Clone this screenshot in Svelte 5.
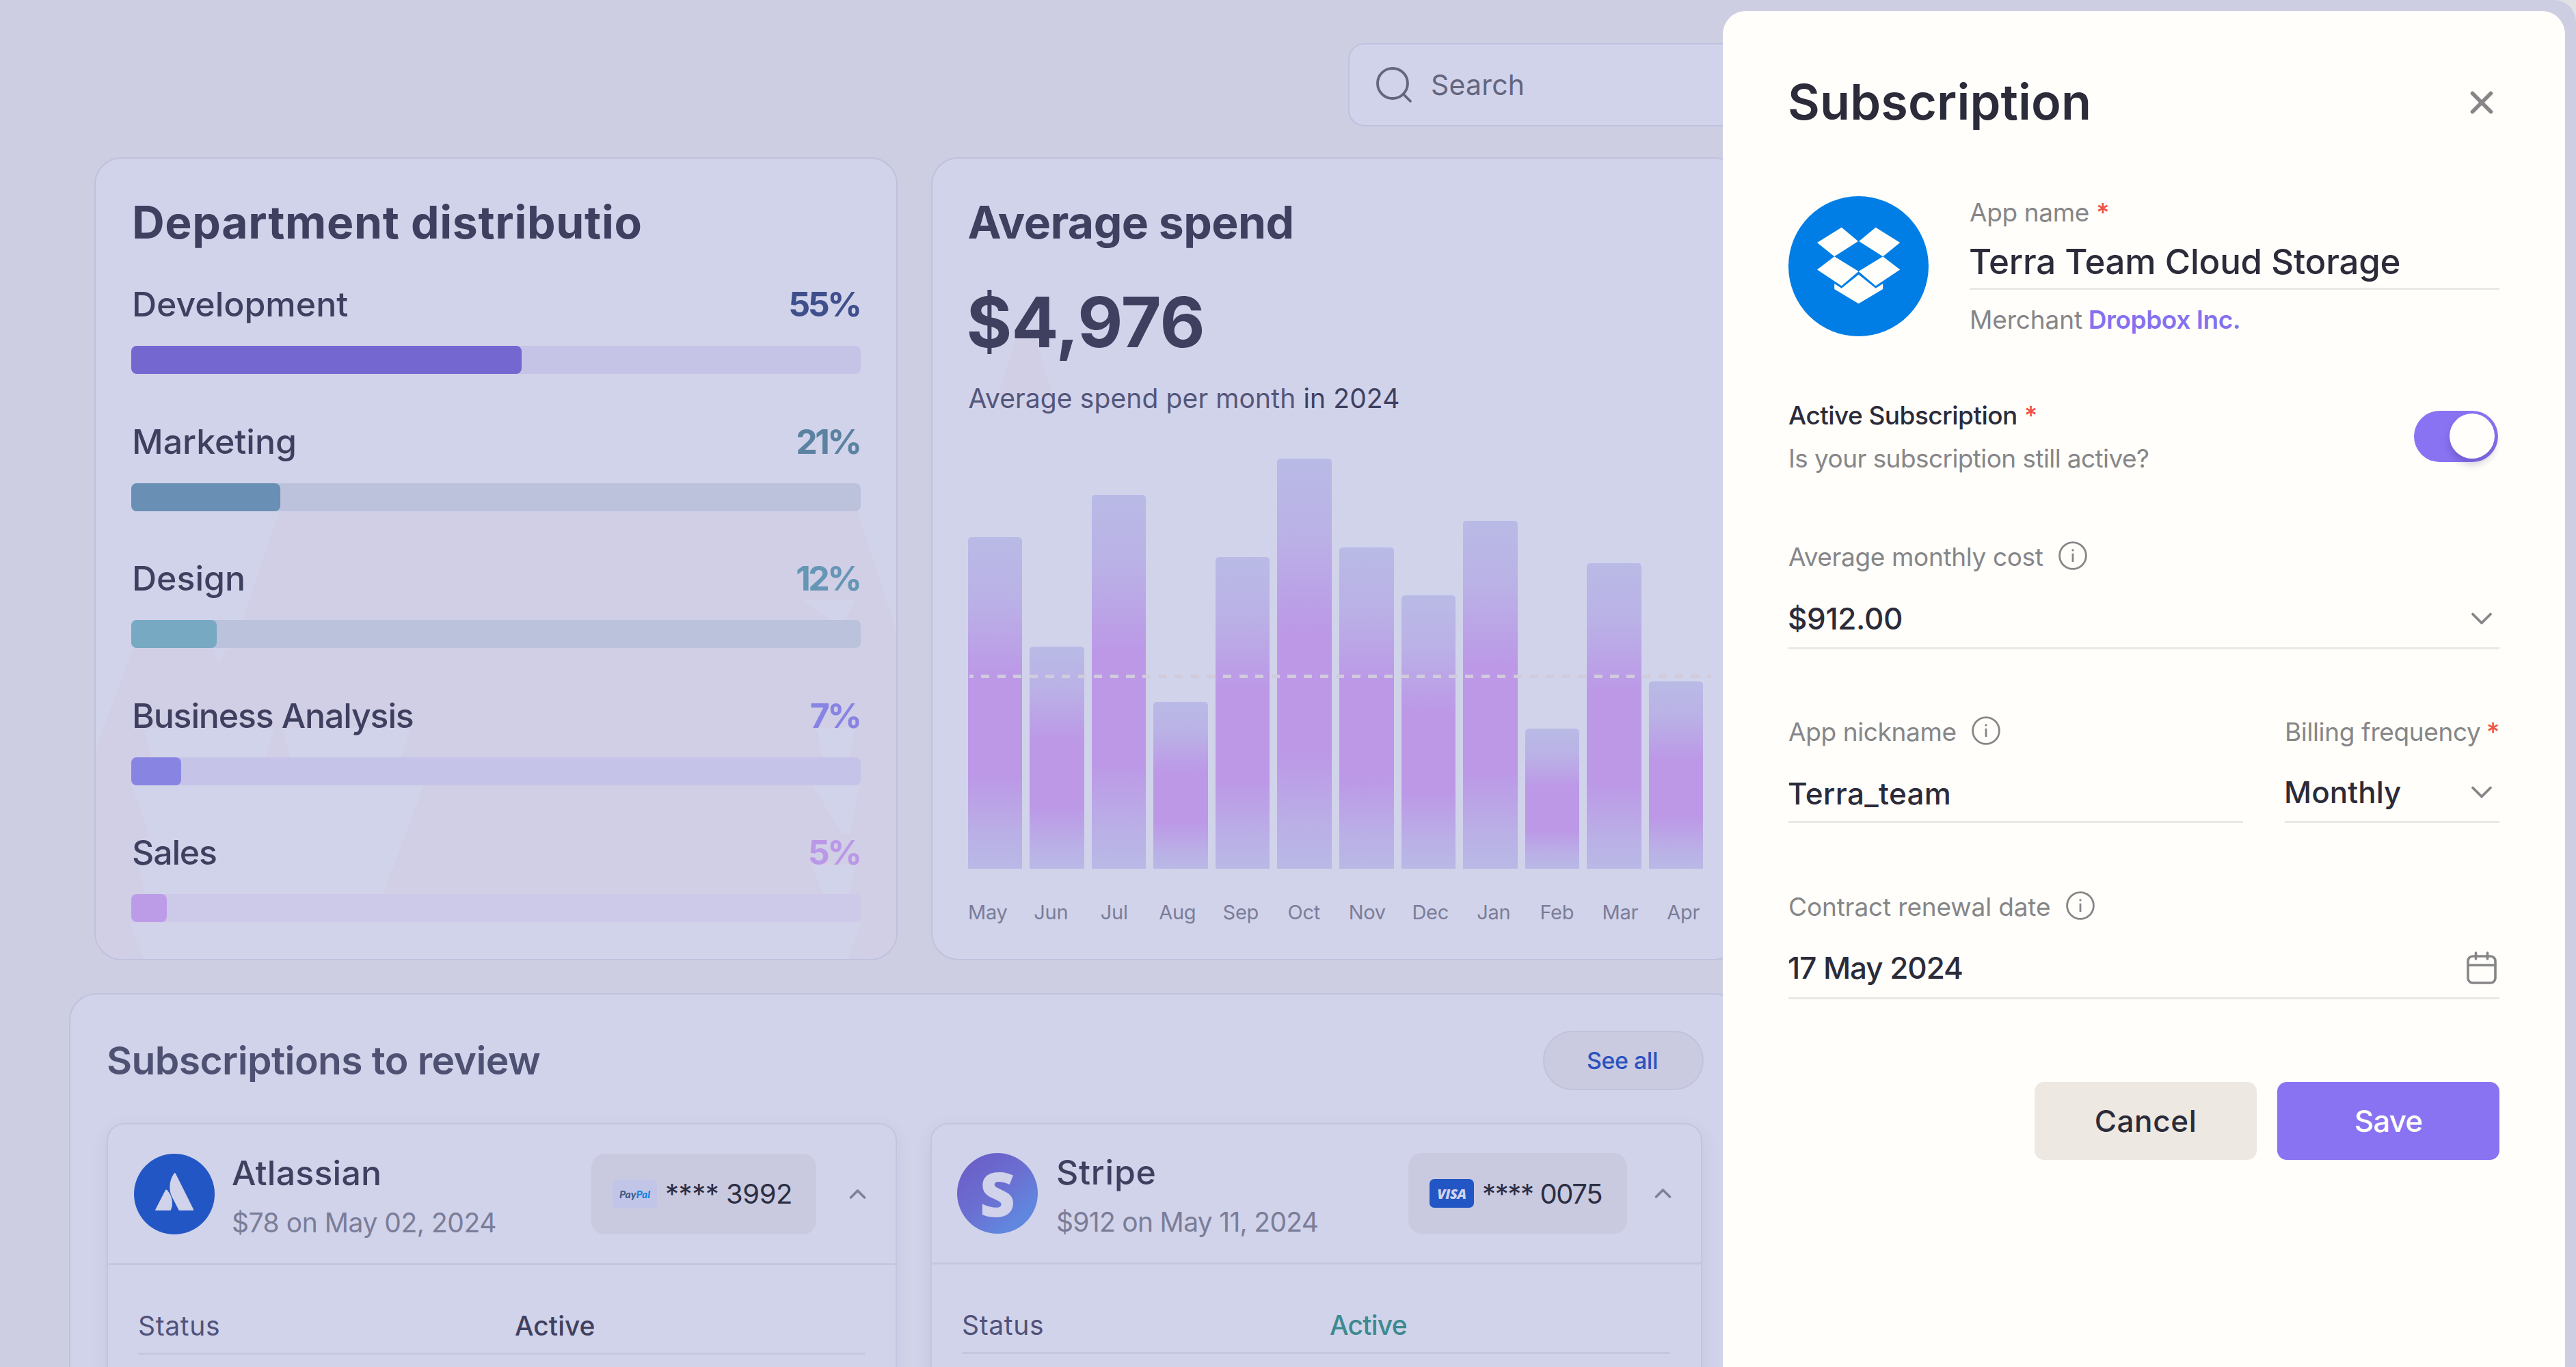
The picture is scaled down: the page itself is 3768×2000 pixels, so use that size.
<script lang="ts">
  type Department = { name: string; percent: number; width: number; tone: string }
  type Review = {
    id: string
    name: string
    charge: string
    card: 'PayPal' | 'VISA'
    digits: string
    green?: boolean
  }

  const departments: Department[] = [
    { name: 'Development', percent: 55, width: 53.5, tone: 'violet' },
    { name: 'Marketing', percent: 21, width: 20.4, tone: 'steel' },
    { name: 'Design', percent: 12, width: 11.7, tone: 'teal' },
    { name: 'Business Analysis', percent: 7, width: 6.8, tone: 'indigo' },
    { name: 'Sales', percent: 5, width: 4.9, tone: 'orchid' },
  ]

  // bar height in percent of the tallest month
  const months = [
    { label: 'May', value: 80.9 },
    { label: 'Jun', value: 54.2 },
    { label: 'Jul', value: 91.1 },
    { label: 'Aug', value: 40.7 },
    { label: 'Sep', value: 76 },
    { label: 'Oct', value: 100 },
    { label: 'Nov', value: 78.4 },
    { label: 'Dec', value: 66.7 },
    { label: 'Jan', value: 84.9 },
    { label: 'Feb', value: 34.1 },
    { label: 'Mar', value: 74.5 },
    { label: 'Apr', value: 45.6 },
  ]

  const reviews: Review[] = [
    { id: 'atlassian', name: 'Atlassian', charge: '$78 on May 02, 2024', card: 'PayPal', digits: '3992' },
    { id: 'stripe', name: 'Stripe', charge: '$912 on May 11, 2024', card: 'VISA', digits: '0075', green: true },
  ]

  let active = $state(true)
</script>

{#snippet info()}
  <svg class="info" viewBox="0 0 42 42" fill="none" stroke="currentColor" stroke-width="2.8">
    <circle cx="21" cy="21" r="19.4" />
    <path d="M21 17.8V30" />
    <path d="M21 11.4V14.4" />
  </svg>
{/snippet}

{#snippet chevron()}
  <svg class="chevron" viewBox="0 0 32 20" fill="none" stroke="currentColor" stroke-width="3.8" stroke-linecap="round" stroke-linejoin="round">
    <path d="M3 3.5 16 16.5 29 3.5" />
  </svg>
{/snippet}

<div class="app">
  <div class="dashboard">
    <div class="search">
      <svg width="54" height="54" viewBox="0 0 54 54" fill="none" stroke="currentColor" stroke-width="3.8" stroke-linecap="round">
        <circle cx="25" cy="25" r="22" />
        <path d="M40.5 40.5 51 51" />
      </svg>
      <span>Search</span>
    </div>

    <div class="row">
      <section class="card departments">
        <svg class="departments__tint" viewBox="0 0 1174 1174">
          <path class="tint" d="M271 518H1116L1167 675 1174 700V1174H0V872L57 718H172L182 740 217 675 252 570Z" />
          <path class="clear" d="M72 835H263L251 879 269 897 287 879 275 835H462L449 879 482 919 422 1079H75L62 1030 80 990 54 919 84 879Z" />
          <path class="clear" d="M52 1120H1122L1102 1174H72Z" />
          <path class="clear" d="M1035 648H1113L1094 688Z" />
          <path class="clear" d="M1056 835H1113L1105 879 1120 919 1105 990H1094L1050 919 1065 879Z" />
          <path class="clear" d="M1049 1035H1113L1105 1079H1065Z" />
        </svg>

        <h2 class="card__title card__title--wide">Department distributio</h2>
        {#each departments as d}
          <div class="dept dept--{d.tone}">
            <div class="dept__head">
              <span class="dept__name" class:dept__name--tight={d.percent < 10}>{d.name}</span>
              <span class="dept__percent">{d.percent}%</span>
            </div>
            <div class="dept__track">
              <div class="dept__fill" style="width: {d.width}%"></div>
            </div>
          </div>
        {/each}
      </section>

      <section class="card spend">
        <svg class="spend__tint" viewBox="0 0 80 84"><path class="tint" d="M26 0H56L79 84H0Z" /></svg>
        <h2 class="card__title">Average spend</h2>
        <div class="spend__total">$4,976</div>
        <div class="spend__caption">Average spend per month <b>in 2024</b></div>
        <div class="chart">
          {#each months as m}
            <div class="chart__bar" style="height: {m.value}%"></div>
          {/each}
          <div class="chart__average"></div>
        </div>
        <div class="months">
          {#each months as m}
            <span>{m.label}</span>
          {/each}
        </div>
      </section>
    </div>

    <section class="card reviews">
      <div class="reviews__head">
        <h2>Subscriptions to review</h2>
        <button class="see-all" type="button">See all</button>
      </div>

      <div class="reviews__list">
        {#each reviews as r}
          <article class="review review--{r.id}">
            <header class="review__head">
              {#if r.id === 'atlassian'}
                <svg class="review__logo" viewBox="0 0 118 118">
                  <circle cx="59" cy="59" r="59" fill="#2356c5" />
                  <path fill="#d1d3ea" d="M45.7 53.8Q47 51.6 48.8 53.4C56 62 58 73 53.6 83H32Q30.6 83 31.4 81.4Z" />
                  <path fill="#d1d3ea" d="M58.4 29Q59.7 26.8 60.9 29L87 81.2Q87.6 83 85.8 83H65.8L55 62C51 53 51 40 58.4 29Z" />
                </svg>
              {:else}
                <div class="review__logo review__logo--stripe">S</div>
              {/if}

              <div class="review__text">
                <div class="review__name">{r.name}</div>
                <div class="review__charge">{r.charge}</div>
              </div>

              <div class="pay">
                {#if r.card === 'PayPal'}
                  <span class="pay__brand pay__brand--paypal">Pay<i>Pal</i></span>
                {:else}
                  <span class="pay__brand pay__brand--visa">VISA</span>
                {/if}
                <span class="pay__digits">**** {r.digits}</span>
              </div>

              <svg class="review__toggle" width="25" height="16" viewBox="0 0 25 16" fill="none" stroke="currentColor" stroke-width="3.6" stroke-linecap="round" stroke-linejoin="round">
                <path d="M2.5 13 12.5 3 22.5 13" />
              </svg>
            </header>

            <div class="status">
              <span>Status</span>
              <strong class:status--green={r.green}>Active</strong>
            </div>
          </article>
        {/each}
      </div>
    </section>
  </div>

  <aside class="panel">
    <header class="panel__head">
      <h1>Subscription</h1>
      <svg width="36" height="36" viewBox="0 0 36 36" fill="none" stroke="currentColor" stroke-width="5.6" stroke-linecap="round">
        <path d="M4.5 4.5 31.5 31.5M31.5 4.5 4.5 31.5" />
      </svg>
    </header>

    <div class="product">
      <svg class="product__logo" viewBox="0 0 205 205">
        <circle cx="102.5" cy="102.5" r="102.5" fill="#007ee6" />
        <g fill="#fffefa">
          <path d="M77.7 45.8 102 66 67.2 88.2 42 68Z" />
          <path d="M127.6 45.8 163.2 68 138.2 88.2 103.2 66Z" />
          <path d="M67.2 88.2 102.6 110 77.7 131.2 42 107.6Z" />
          <path d="M138.2 88.2 163.2 107.6 127.6 131.2 102.6 110Z" />
          <path d="M102.6 114.7 127.6 134.8 138.2 128V136L102.6 157.3 67.2 136V128L77.7 134.8Z" />
        </g>
      </svg>
      <div class="product__fields">
        <div class="label">App name <em>*</em></div>
        <div class="product__name">Terra Team Cloud Storage</div>
        <div class="label label--merchant">Merchant <a href="#merchant">Dropbox Inc.</a></div>
      </div>
    </div>

    <div class="activity">
      <div>
        <div class="label label--strong">Active Subscription <em>*</em></div>
        <div class="label label--question">Is your subscription still active?</div>
      </div>
      <button class="switch" class:switch--on={active} type="button" aria-label="Active subscription" onclick={() => (active = !active)}></button>
    </div>

    <div class="field">
      <div class="label">Average monthly cost {@render info()}</div>
      <div class="field__value">$912.00 {@render chevron()}</div>
    </div>

    <div class="field-row">
      <div class="field field--nickname">
        <div class="label">App nickname {@render info()}</div>
        <div class="field__value field__value--wide">Terra_team</div>
      </div>
      <div class="field field--billing">
        <div class="label">Billing frequency <em>*</em></div>
        <div class="field__value field__value--monthly">Monthly {@render chevron()}</div>
      </div>
    </div>

    <div class="field field--date">
      <div class="label label--loose">Contract renewal date {@render info()}</div>
      <div class="field__value field__value--date">
        17 May 2024
        <svg class="calendar" width="44" height="48" viewBox="0 0 44 48" fill="none" stroke="currentColor" stroke-width="3.6" stroke-linecap="round">
          <rect x="2" y="7" width="40" height="39" rx="7" />
          <path d="M2 20H42M13.5 2V11M30.5 2V11" />
        </svg>
      </div>
    </div>

    <div class="actions">
      <button class="btn" type="button">Cancel</button>
      <button class="btn btn--primary" type="button">Save</button>
    </div>
  </aside>
</div>

<style>
  :global(body) {
    background: #e2e2e6;
  }

  .app {
    position: relative;
    width: 3768px;
    height: 2000px;
    overflow: hidden;
    border-radius: 0 32px 0 0;
    background: #cecee3;
    color: #3f4060;
    font-family: Inter, 'Liberation Sans', sans-serif;
  }

  h1, h2 { margin: 0; }

  button {
    padding: 0;
    border: 0;
    font: inherit;
    color: inherit;
  }

  svg {
    display: block;
    flex-shrink: 0;
  }

  .dashboard {
    display: flex;
    flex-direction: column;
    width: 2548px;
    padding: 63px 0 0 101px;
    box-sizing: border-box;
  }

  /* ── Search ── */
  .search {
    display: flex;
    align-items: center;
    gap: 27px;
    width: 576px;
    height: 122px;
    box-sizing: border-box;
    margin-left: auto;
    padding-left: 38px;
    border: 2px solid #bfc1de;
    border-radius: 24px;
    background: #d1d3ea;
    color: #64657f;
    font-size: 41px;
    letter-spacing: 0.005em;
  }

  /* ── Cards ── */
  .row {
    display: flex;
    gap: 49px;
    height: 1175px;
    margin: 45px 0 0 37px;
  }

  .card {
    position: relative;
    box-sizing: border-box;
    border: 2px solid #bfc1dd;
    border-radius: 40px;
    background: #d1d3ea;
    overflow: hidden;
  }

  .card__title {
    position: relative;
    font-size: 66px;
    font-weight: 700;
    line-height: 80px;
    letter-spacing: -0.008em;
  }

  .card__title--wide {
    padding-left: 1px;
    letter-spacing: 0.0105em;
  }

  .tint { fill: #d1cfe6; }
  .clear { fill: #d1d3ea; }

  /* ── Department distribution ── */
  .departments {
    width: 1175px;
    padding: 53px 52px 0 52px;
  }

  .departments__tint {
    position: absolute;
    top: -2px;
    left: -2px;
    width: 1174px;
    height: 1174px;
  }

  .dept {
    position: relative;
    margin-bottom: 68.5px;
  }

  .card__title + .dept { margin-top: 50px; }

  .dept__head {
    display: flex;
    justify-content: space-between;
    padding: 0 1px;
    font-size: 50px;
    line-height: 60px;
  }

  .dept__name { font-weight: 500; }
  .dept__name--tight { letter-spacing: -0.023em; }

  .dept__percent {
    font-weight: 650;
    letter-spacing: -0.07em;
  }

  .dept__track {
    height: 41px;
    margin-top: 31px;
    border-radius: 8px;
  }

  .dept__fill {
    height: 100%;
    border-radius: 8px;
  }

  .dept--violet .dept__percent { color: #3f4f8c; }
  .dept--violet .dept__track { background: #c5c4e6; }
  .dept--violet .dept__fill { background: #7467d0; }

  .dept--steel .dept__percent { color: #5b82a0; }
  .dept--steel .dept__track { background: #bcc1dc; }
  .dept--steel .dept__fill { background: #6a8fb4; }

  .dept--teal .dept__percent { color: #6596b6; }
  .dept--teal .dept__track { background: #bbc2db; }
  .dept--teal .dept__fill { background: #78a9c3; }

  .dept--indigo .dept__percent { color: #8784e4; }
  .dept--indigo .dept__track { background: #c5c4e8; }
  .dept--indigo .dept__fill { background: #8885e2; }

  .dept--orchid .dept__percent { color: #bb98e7; }
  .dept--orchid .dept__track { background: #cdc9e8; }
  .dept--orchid .dept__fill { background: #bd9ce7; }

  /* ── Average spend ── */
  .spend {
    width: 1187px;
    padding: 53px 0 0 52px;
  }

  .spend__tint {
    position: absolute;
    top: 263px;
    left: 96px;
    width: 80px;
    height: 84px;
  }

  .spend__total {
    position: relative;
    margin: 51px 0 0 -2px;
    font-size: 102px;
    font-weight: 700;
    line-height: 110px;
    letter-spacing: -0.008em;
  }

  .spend__caption {
    position: relative;
    margin: 33px 0 0 1px;
    color: #54567a;
    font-size: 39px;
    line-height: 48px;
    letter-spacing: 0.003em;
  }

  .spend__caption b {
    color: #3f4060;
    font-weight: 400;
  }

  .chart {
    position: relative;
    display: flex;
    align-items: flex-end;
    gap: 11px;
    width: 1076px;
    height: 600px;
    margin-top: 64px;
  }

  .chart__bar {
    flex: 1;
    border-radius: 5px 5px 0 0;
    background: linear-gradient(#b9bae6, #bab2e6 18%, #bc98e7 42%, #bc98e7 72%, #bab0e6 90%, #b9b9e6);
  }

  .chart__average {
    position: absolute;
    top: 316px;
    left: 2px;
    width: 1085px;
    height: 5px;
    background: repeating-linear-gradient(90deg, #d0cbdd 0 12.2px, transparent 12.2px 23.6px) -6.7px 0 / 1100px 5px no-repeat;
  }

  .months {
    display: grid;
    grid-template-columns: repeat(12, 92.5px);
    margin: 46px 0 0 -17px;
    color: #7b7d99;
    font-size: 29px;
    line-height: 36px;
    letter-spacing: -0.01em;
    text-align: center;
  }

  /* ── Subscriptions to review ── */
  .reviews {
    width: 2447px;
    height: 700px;
    margin-top: 48px;
    padding: 53px 54px 0 53px;
  }

  .reviews__head {
    display: flex;
    align-items: center;
    justify-content: space-between;
    height: 87px;
  }

  .reviews__head h2 {
    color: #4f5173;
    font-size: 57px;
    font-weight: 600;
    letter-spacing: -0.0103em;
  }

  .see-all {
    width: 235px;
    height: 87px;
    padding-right: 3px;
    border: 2px solid #c1c3dc;
    border-radius: 44px;
    background: #cacbe0;
    color: #2b52be;
    font-size: 34px;
    font-weight: 500;
    letter-spacing: -0.014em;
  }

  .reviews__list {
    display: flex;
    gap: 49px;
    margin-top: 48px;
  }

  .review {
    box-sizing: border-box;
    width: 1156px;
    height: 600px;
    border: 2px solid #c3c4de;
    border-radius: 26px;
    box-shadow: 0 8px 24px rgba(80, 80, 130, 0.09);
  }

  .review--stripe { width: 1129px; }

  .review__head {
    display: flex;
    align-items: center;
    height: 203px;
    padding: 0 43px 0 38px;
    border-bottom: 3px solid #c5c6df;
  }

  .review--stripe .review__head {
    height: 202px;
    padding-left: 37px;
  }

  .review__logo {
    flex-shrink: 0;
    width: 118px;
    height: 118px;
  }

  .review__logo--stripe {
    border-radius: 50%;
    background: linear-gradient(140deg, #6a5fc8 12%, #6b6fd2 48%, #6186de 78%);
    color: #d1d3ea;
    font: 800 90px/116px 'Open Sans', sans-serif;
    text-align: center;
  }

  .review__text {
    margin: 5px auto 0 25px;
    white-space: nowrap;
  }

  .review--stripe .review__text { margin-left: 27px; }

  .review__name {
    font-size: 50px;
    font-weight: 500;
    line-height: 60px;
    letter-spacing: 0.0044em;
  }

  .review--stripe .review__name { letter-spacing: 0.015em; }

  .review__charge {
    margin-top: 19px;
    color: #7b7d98;
    font-size: 39px;
    line-height: 48px;
    letter-spacing: -0.012em;
  }

  .review--stripe .review__charge { letter-spacing: -0.018em; }

  .pay {
    display: flex;
    align-items: center;
    gap: 12px;
    box-sizing: border-box;
    width: 329px;
    height: 118px;
    margin-right: 48px;
    padding-left: 31px;
    border-radius: 20px;
    background: #c9cae0;
  }

  .review--stripe .pay {
    width: 320px;
    margin-right: 40px;
  }

  .pay__brand {
    display: flex;
    align-items: center;
    justify-content: center;
    width: 65px;
    height: 42px;
    border-radius: 7px;
    font-style: italic;
  }

  .pay__brand--paypal {
    background: #c1c5e7;
    color: #3f5b86;
    font-family: Lato, sans-serif;
    font-size: 15.5px;
    font-weight: 900;
  }

  .pay__brand--paypal i { color: #1483e2; }

  .pay__brand--visa {
    background: #2356c5;
    color: #d1d3ea;
    font-family: 'Open Sans', sans-serif;
    font-size: 20px;
    font-weight: 800;
    letter-spacing: -0.02em;
  }

  .pay__digits {
    color: #2c2e44;
    font-size: 40px;
    letter-spacing: -0.0116em;
    white-space: nowrap;
  }

  .review--stripe .pay__digits { letter-spacing: -0.035em; }

  .review__toggle { color: #7f819a; }

  .status {
    display: grid;
    grid-template-columns: 551px auto;
    margin: 0 45px 0 44px;
    padding: 65px 0 15px;
    border-bottom: 3px solid #c5c6df;
    font-size: 39px;
    line-height: 48px;
  }

  .review--stripe .status { grid-template-columns: 538px auto; }

  .status span {
    color: #50527a;
    letter-spacing: 0.017em;
  }

  .status strong { font-weight: 500; }
  .status .status--green { color: #3c8a90; letter-spacing: -0.02em; }

  /* ── Side panel ── */
  .panel {
    position: absolute;
    top: 16px;
    right: 16px;
    bottom: -40px;
    width: 1232px;
    box-sizing: border-box;
    padding: 88px 96px 0;
    border-radius: 34px;
    background: #fffefa;
    color: #2b2b3a;
  }

  .panel__head {
    display: flex;
    align-items: center;
    justify-content: space-between;
    padding-right: 8px;
    color: #868688;
  }

  .panel__head svg { margin-top: 2px; }

  .panel__head h1 {
    margin-left: -1px;
    color: #2b2b3a;
    font-size: 72px;
    font-weight: 620;
    line-height: 90px;
    letter-spacing: 0.002em;
  }

  .label {
    display: flex;
    align-items: center;
    gap: 0.28em;
    color: #868688;
    font-size: 37px;
    line-height: 46px;
    letter-spacing: -0.01em;
    white-space: nowrap;
  }

  .label em {
    color: #f0524a;
    font-style: normal;
    font-weight: 500;
    letter-spacing: 0;
  }

  .label--strong {
    color: #2b2b3a;
    font-weight: 500;
    letter-spacing: -0.0149em;
  }

  .label--loose { letter-spacing: -0.0038em; }
  .label--question { margin-top: 17px; letter-spacing: -0.0158em; }

  .label--merchant {
    gap: 0.24em;
    margin-top: 21px;
    letter-spacing: -0.004em;
  }

  .label a {
    color: #8571f0;
    font-weight: 600;
    letter-spacing: -0.012em;
    text-decoration: none;
  }

  .product {
    display: flex;
    gap: 60px;
    margin-top: 93px;
  }

  .product__logo {
    width: 205px;
    height: 205px;
  }

  .product__fields {
    flex: 1;
    padding-top: 1px;
  }

  .product__name {
    margin: 18px 0 0;
    padding-bottom: 7px;
    border-bottom: 3px solid #eae8e2;
    font-size: 51px;
    font-weight: 500;
    line-height: 62px;
    letter-spacing: -0.0045em;
    text-indent: -1px;
  }

  .activity {
    display: flex;
    align-items: center;
    justify-content: space-between;
    margin-top: 93px;
    padding-right: 2px;
  }

  .switch {
    width: 123px;
    height: 75px;
    margin-bottom: 3px;
    border-radius: 38px;
    background: #c9c9cf;
  }

  .switch::after {
    content: '';
    display: block;
    width: 66px;
    height: 66px;
    margin-left: 5px;
    border-radius: 50%;
    background: #fffefa;
    box-shadow: 0 8px 12px rgba(30, 20, 90, 0.22);
  }

  .switch--on { background: #8973f2; }
  .switch--on::after { margin-left: 52px; }

  .field { margin-top: 98px; }

  .info {
    width: 42px;
    height: 42px;
    margin: 0 0 4px 12px;
  }

  .field__value {
    display: flex;
    align-items: center;
    justify-content: space-between;
    margin-top: 40px;
    padding-bottom: 15px;
    border-bottom: 3px solid #eae8e2;
    font-size: 44px;
    font-weight: 520;
    line-height: 54px;
    letter-spacing: -0.0079em;
    text-indent: -1px;
  }

  .field__value--wide {
    padding-bottom: 13px;
    letter-spacing: 0.008em;
  }

  .field__value--monthly {
    margin-top: 38px;
    letter-spacing: 0;
  }

  .field__value--date {
    margin-top: 39px;
    padding-bottom: 16px;
    letter-spacing: -0.024em;
  }

  .chevron {
    width: 32px;
    height: 20px;
    margin-right: 10px;
    color: #868688;
  }

  .calendar {
    margin-right: 4px;
    color: #868688;
  }

  .field-row {
    display: flex;
    gap: 61px;
  }

  .field--nickname { flex: 1; }
  .field--billing { width: 314px; }
  .field--billing .label { gap: 0.23em; }
  .field--date { margin-top: 100px; }

  .actions {
    display: flex;
    justify-content: flex-end;
    gap: 30px;
    margin-top: 121px;
  }

  .btn {
    width: 325px;
    height: 114px;
    border-radius: 14px;
    background: #ede8e1;
    font-size: 44px;
    font-weight: 500;
    letter-spacing: 0.0138em;
  }

  .btn--primary {
    background: #8973f2;
    color: #fffefa;
    letter-spacing: -0.02em;
  }
</style>
